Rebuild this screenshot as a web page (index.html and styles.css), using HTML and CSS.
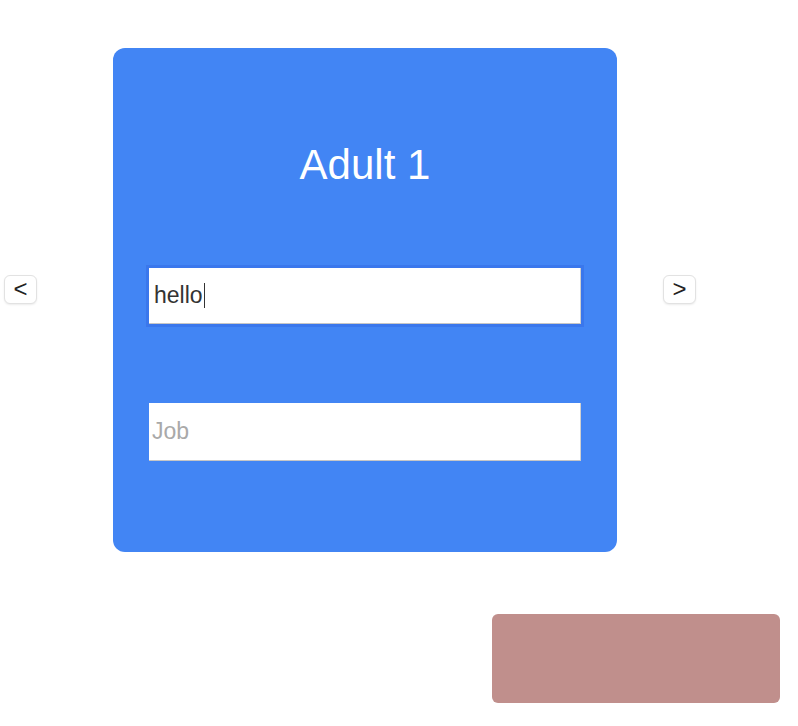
FILE: index.html
```html
<!DOCTYPE html>
<html lang="en">
<head>
<meta charset="utf-8">
<title>Adults</title>
<link rel="stylesheet" href="styles.css">
</head>
<body>
<div class="page">
  <div class="carousel">
    <button class="nav-btn nav-prev" type="button">&lt;</button>
    <div class="card">
      <h1 class="card-title">Adult 1</h1>
      <div class="field field-focused"><span class="field-value">hello</span><span class="caret"></span></div>
      <div class="field field-second"><span class="field-placeholder">Job</span></div>
    </div>
    <button class="nav-btn nav-next" type="button">&gt;</button>
  </div>
  <div class="footer-row">
    <div class="submit-block"></div>
  </div>
</div>
</body>
</html>
```

FILE: styles.css
```css
html, body {
  margin: 0;
  padding: 0;
  background: #ffffff;
  font-family: "Liberation Sans", Arial, sans-serif;
}

.page {
  width: 798px;
  height: 726px;
  padding-top: 48px;
  box-sizing: border-box;
}

.carousel {
  display: flex;
  align-items: flex-start;
  padding-left: 4px;
}

.nav-btn {
  width: 33px;
  height: 29px;
  margin-top: 227px;
  padding: 0 0 2px 0;
  background: #ffffff;
  border: 1px solid #e2e2e2;
  border-radius: 6px;
  box-shadow: 0 1px 2px rgba(0, 0, 0, 0.08);
  font-family: "Liberation Sans", Arial, sans-serif;
  font-size: 24px;
  line-height: 1;
  color: #222222;
  display: flex;
  align-items: center;
  justify-content: center;
}

.card {
  margin-left: 76px;
  width: 504px;
  height: 504px;
  box-sizing: border-box;
  padding: 93px 36px 0 36px;
  background: #4285f4;
  border-radius: 12px;
  display: flex;
  flex-direction: column;
}

.nav-next {
  margin-left: 46px;
}

.card-title {
  margin: 0;
  height: 48px;
  font-size: 42px;
  font-weight: normal;
  line-height: 48px;
  text-align: center;
  color: #ffffff;
}

.field {
  height: 56px;
  box-sizing: border-box;
  background: #ffffff;
  border-bottom: 1px solid #c6c6c6;
  border-right: 1px solid #d0d0d0;
  display: flex;
  align-items: center;
  padding-left: 5px;
  font-size: 23px;
}

.field-focused {
  margin-top: 79px;
  box-shadow: 0 0 0 3px #3a77ec;
}

.field-second {
  margin-top: 79px;
  height: 58px;
  padding-left: 3px;
}

.field-value {
  color: #333333;
}

.caret {
  width: 1px;
  height: 25px;
  margin-left: 1px;
  background: #333333;
}

.field-placeholder {
  color: #a9a9a9;
}

.footer-row {
  display: flex;
  margin-top: 62px;
  padding-left: 492px;
}

.submit-block {
  width: 288px;
  height: 89px;
  background: #c08f8c;
  border-radius: 6px;
}
```
